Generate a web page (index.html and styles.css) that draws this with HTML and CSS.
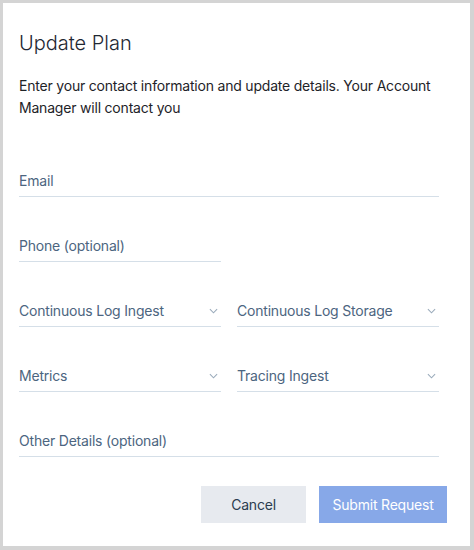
FILE: index.html
```html
<!DOCTYPE html>
<html>
<head>
<meta charset="utf-8">
<link rel="stylesheet" href="styles.css">
</head>
<body>
<div class="panel">
  <h1 class="title">Update Plan</h1>
  <p class="desc">Enter your contact information and update details. Your Account Manager will contact you</p>
  <form class="form">
    <div class="field full"><span class="label">Email</span></div>
    <div class="field half"><span class="label">Phone (optional)</span></div>
    <div class="row">
      <div class="field select"><span class="label">Continuous Log Ingest</span><svg class="chev" viewBox="0 0 10 6"><path d="M1 1l4 4 4-4" /></svg></div>
      <div class="field select"><span class="label">Continuous Log Storage</span><svg class="chev" viewBox="0 0 10 6"><path d="M1 1l4 4 4-4" /></svg></div>
    </div>
    <div class="row">
      <div class="field select"><span class="label">Metrics</span><svg class="chev" viewBox="0 0 10 6"><path d="M1 1l4 4 4-4" /></svg></div>
      <div class="field select"><span class="label">Tracing Ingest</span><svg class="chev" viewBox="0 0 10 6"><path d="M1 1l4 4 4-4" /></svg></div>
    </div>
    <div class="field full"><span class="label">Other Details (optional)</span></div>
  </form>
  <div class="actions">
    <button class="btn cancel" type="button">Cancel</button>
    <button class="btn submit" type="button">Submit Request</button>
  </div>
</div>
</body>
</html>
```

FILE: styles.css
```css
html, body {
  margin: 0;
  padding: 0;
}
body {
  background: #d4d4d4;
  font-family: Inter, "Noto Sans", sans-serif;
  letter-spacing: -0.2px;
  padding: 3px 4px 4px 3px;
  width: 474px;
  height: 550px;
  box-sizing: border-box;
}
.panel {
  background: #ffffff;
  height: 543px;
  box-sizing: border-box;
  padding: 28px 23px 0 16px;
}
.title {
  margin: 0;
  font-size: 20px;
  line-height: 24px;
  font-weight: 300;
  color: #1f2833;
  letter-spacing: 0;
}
.desc {
  margin: 20px 0 0;
  font-size: 14px;
  line-height: 22px;
  color: #1e2328;
  width: 424px;
}
.form {
  margin-top: 52px;
  width: 420px;
  display: flex;
  flex-direction: column;
  gap: 39px;
}
.field {
  height: 26px;
  box-sizing: border-box;
  border-bottom: 1px solid #d5dfe8;
  display: flex;
  align-items: flex-start;
  justify-content: space-between;
}
.field.half {
  width: 202px;
}
.label {
  font-size: 14px;
  line-height: 20px;
  color: #4c6580;
}
.row {
  display: grid;
  grid-template-columns: 1fr 1fr;
  gap: 16px;
}
.chev {
  width: 9px;
  height: 6px;
  margin: 7px 3px 0 0;
  fill: none;
  stroke: #9aabbb;
  stroke-width: 1.2;
}
.actions {
  margin-top: 29px;
  display: flex;
  justify-content: flex-end;
  gap: 13px;
}
.btn {
  border: none;
  height: 37px;
  font-family: Inter, "Noto Sans", sans-serif;
  letter-spacing: -0.2px;
  font-size: 14px;
  padding: 0;
}
.cancel {
  width: 105px;
  background: #e7eaef;
  color: #2b3d50;
}
.submit {
  width: 128px;
  background: #87a8e8;
  color: #ffffff;
}
```
